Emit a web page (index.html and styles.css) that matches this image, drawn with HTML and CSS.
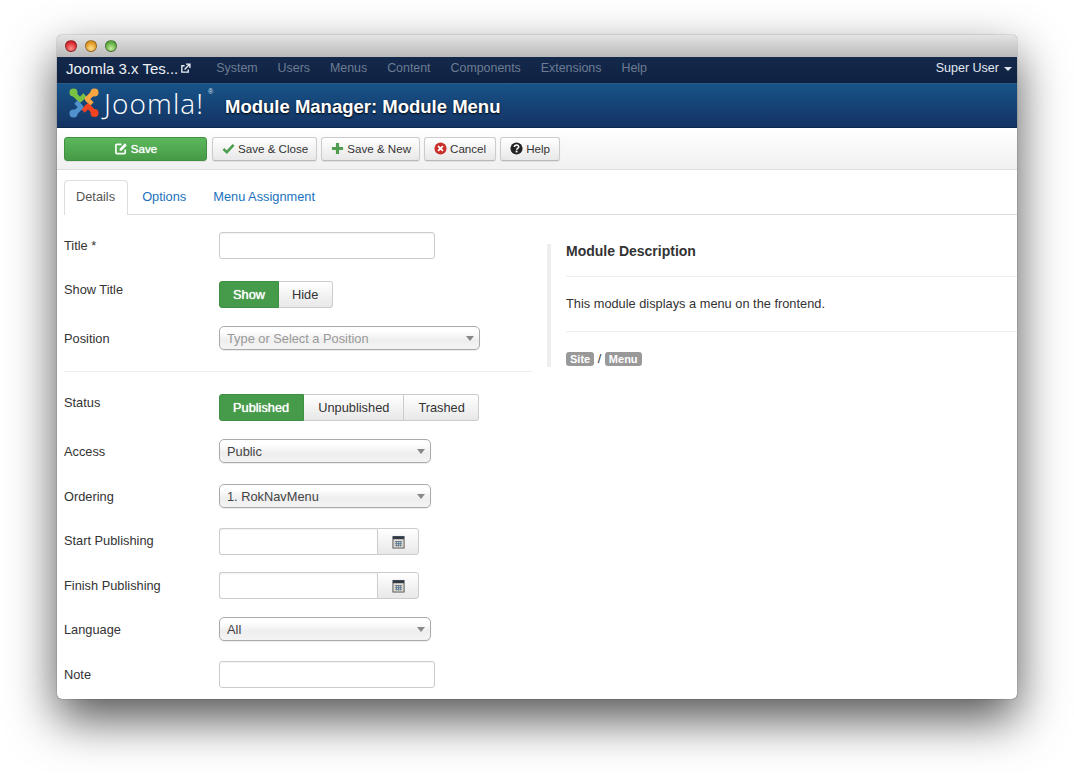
FILE: index.html
```html
<!DOCTYPE html>
<html lang="en">
<head>
    <meta charset="UTF-8">
    <meta name="viewport" content="width=device-width, initial-scale=1.0">
    <title>Module Manager: Module Menu</title>
    <link rel="stylesheet" href="styles.css">
</head>
<body>

<div class="window">
    <!-- Mac title bar -->
    <div class="titlebar">
        <span class="light light-red"></span>
        <span class="light light-yellow"></span>
        <span class="light light-green"></span>
    </div>

    <!-- Top navigation -->
    <div class="navbar">
        <a class="brand">Joomla 3.x Tes...
            <svg class="brand-icon" viewBox="0 0 12 12" width="11" height="11"><path d="M9 7v3H2V3h3" fill="none" stroke="#e8edf3" stroke-width="1.5"/><path d="M5 7l5-5M6.5 1.2h4.3v4.3" fill="none" stroke="#e8edf3" stroke-width="1.5"/></svg>
        </a>
        <ul class="nav-menu">
            <li>System</li>
            <li>Users</li>
            <li>Menus</li>
            <li>Content</li>
            <li>Components</li>
            <li>Extensions</li>
            <li>Help</li>
        </ul>
        <div class="nav-user">Super User <span class="nav-caret"></span></div>
    </div>

    <!-- Logo and page title -->
    <div class="header">
        <div class="logo">
            <svg viewBox="0 0 30 30" width="30" height="30" fill="none" stroke-width="4.6" stroke-linejoin="round">
                <path d="M4 5L11 12L16 7" stroke="#7ac143"/><circle cx="4.5" cy="4.5" r="4" fill="#7ac143"/>
                <path d="M25 4L18 11L23 16" stroke="#f9a541"/><circle cx="25.5" cy="4.5" r="4" fill="#f9a541"/>
                <path d="M26 25L19 18L14 23" stroke="#f44321"/><circle cx="25.5" cy="25" r="4" fill="#f44321"/>
                <path d="M5 26L12 19L7 14" stroke="#5091cd"/><circle cx="4.5" cy="25.5" r="4" fill="#5091cd"/>
            </svg>
            <span class="logo-text">Joomla!</span><span class="logo-reg">®</span>
        </div>
        <h1>Module Manager: Module Menu</h1>
    </div>

    <!-- Toolbar -->
    <div class="toolbar">
        <button class="btn btn-save">
            <svg viewBox="0 0 14 14" width="13" height="13"><path d="M11 8v3.5a1 1 0 0 1-1 1H2a1 1 0 0 1-1-1v-8a1 1 0 0 1 1-1h5" fill="none" stroke="#fff" stroke-width="1.8"/><path d="M5 7.2L10.6 1.4l2.2 2.2L7 9.3H5z" fill="#fff"/></svg>
            Save
        </button>
        <button class="btn">
            <svg viewBox="0 0 14 14" width="13" height="13"><path d="M1.5 7.5L5.2 11L12.5 3" fill="none" stroke="#4f9e4f" stroke-width="2.8"/></svg>
            Save &amp; Close
        </button>
        <button class="btn">
            <svg viewBox="0 0 14 14" width="13" height="13"><path d="M7 1v12M1 7h12" fill="none" stroke="#4f9e4f" stroke-width="3.4"/></svg>
            Save &amp; New
        </button>
        <button class="btn btn-wide">
            <svg viewBox="0 0 14 14" width="13" height="13"><circle cx="7" cy="7" r="6.5" fill="#c9302c"/><path d="M4.4 4.4l5.2 5.2M9.6 4.4l-5.2 5.2" stroke="#fff" stroke-width="2"/></svg>
            Cancel
        </button>
        <button class="btn btn-wide">
            <svg viewBox="0 0 14 14" width="13" height="13"><circle cx="7" cy="7" r="6.5" fill="#222"/><path d="M4.8 5.4c0-2.8 4.6-2.8 4.6-.1 0 1.6-2.3 1.5-2.3 3" fill="none" stroke="#fff" stroke-width="1.7"/><rect x="6.1" y="9.3" width="2" height="1.9" fill="#fff"/></svg>
            Help
        </button>
    </div>

    <!-- Tabs -->
    <ul class="tabs">
        <li class="tab tab-active">Details</li>
        <li class="tab">Options</li>
        <li class="tab">Menu Assignment</li>
    </ul>

    <div class="content">
        <!-- Form column -->
        <form class="form">
            <div class="row row-title">
                <label>Title *</label>
                <input class="field" type="text">
            </div>
            <div class="row row-toggle">
                <label>Show Title</label>
                <div class="btn-group btn-group-small">
                    <span class="opt opt-on">Show</span>
                    <span class="opt">Hide</span>
                </div>
            </div>
            <div class="row row-select">
                <label>Position</label>
                <div class="select select-position"><span class="placeholder">Type or Select a Position</span><i class="caret"></i></div>
            </div>
            <hr class="divider">
            <div class="row row-toggle">
                <label>Status</label>
                <div class="btn-group">
                    <span class="opt opt-on">Published</span>
                    <span class="opt">Unpublished</span>
                    <span class="opt">Trashed</span>
                </div>
            </div>
            <div class="row row-select">
                <label>Access</label>
                <div class="select"><span>Public</span><i class="caret"></i></div>
            </div>
            <div class="row row-select row-tight">
                <label>Ordering</label>
                <div class="select"><span>1. RokNavMenu</span><i class="caret"></i></div>
            </div>
            <div class="row row-date row-tight">
                <label>Start Publishing</label>
                <div class="date-group">
                    <input class="field field-date" type="text">
                    <span class="date-btn">
                        <svg viewBox="0 0 14 14" width="13" height="14"><rect x="1" y="1" width="12" height="12.5" fill="#e9dfd0" stroke="#4a5058"/><rect x="1" y="1" width="12" height="3" fill="#2f3a46"/><path d="M3 6.5h8M3 8.5h8M3 10.5h8M5 6v6M7 6v6M9 6v6" stroke="#5f7d9b" stroke-width="1"/></svg>
                    </span>
                </div>
            </div>
            <div class="row row-date">
                <label>Finish Publishing</label>
                <div class="date-group">
                    <input class="field field-date" type="text">
                    <span class="date-btn">
                        <svg viewBox="0 0 14 14" width="13" height="14"><rect x="1" y="1" width="12" height="12.5" fill="#e9dfd0" stroke="#4a5058"/><rect x="1" y="1" width="12" height="3" fill="#2f3a46"/><path d="M3 6.5h8M3 8.5h8M3 10.5h8M5 6v6M7 6v6M9 6v6" stroke="#5f7d9b" stroke-width="1"/></svg>
                    </span>
                </div>
            </div>
            <div class="row row-select row-tight">
                <label>Language</label>
                <div class="select"><span>All</span><i class="caret"></i></div>
            </div>
            <div class="row">
                <label>Note</label>
                <input class="field" type="text">
            </div>
        </form>

        <!-- Description column -->
        <div class="info">
            <h3>Module Description</h3>
            <hr>
            <p>This module displays a menu on the frontend.</p>
            <hr>
            <div class="crumbs"><span class="tag">Site</span> / <span class="tag">Menu</span></div>
        </div>
    </div>
</div>

</body>
</html>
```

FILE: styles.css
```css
html, body {
    margin: 0;
    height: 100%;
    overflow: hidden;
    background: #fff;
}

body {
    font-family: "Liberation Sans", Arial, sans-serif;
    font-size: 12.8px;
    color: #333;
}

/* Window frame */
.window {
    width: 960px;
    height: 664px;
    margin: 35px 0 0 57px;
    border-radius: 5px;
    overflow: hidden;
    background: #fff;
    box-shadow: 0 20px 48px rgba(0, 0, 0, 0.68), 0 0 1px rgba(0, 0, 0, 0.9);
}

.titlebar {
    height: 22px;
    display: flex;
    align-items: center;
    gap: 8px;
    padding-left: 8px;
    background: linear-gradient(#e4e4e4, #b9b9b9);
}

.light {
    width: 12px;
    height: 12px;
    border-radius: 50%;
    border: 1px solid rgba(0, 0, 0, 0.35);
    box-sizing: border-box;
}
.light-red { background: radial-gradient(circle at 50% 75%, #ff8f8a, #d5232a 70%); }
.light-yellow { background: radial-gradient(circle at 50% 75%, #ffe08a, #dd9420 70%); }
.light-green { background: radial-gradient(circle at 50% 75%, #c4ec9a, #5aa83e 70%); }

/* Top navigation */
.navbar {
    height: 26px;
    display: flex;
    align-items: center;
    background: linear-gradient(#13294c, #0f2141);
    padding: 0 5px 4px 9px;
    box-sizing: border-box;
}

.brand {
    color: #eef1f5;
    font-size: 15px;
    display: flex;
    align-items: center;
    gap: 2px;
    white-space: nowrap;
}

.nav-menu {
    display: flex;
    list-style: none;
    margin: 0 0 0 25px;
    padding: 0;
    gap: 20px;
    color: #6d7c92;
    font-size: 12.4px;
    flex: 1;
}

.nav-user {
    color: #e3e8ee;
    font-size: 12.5px;
    display: flex;
    align-items: center;
    gap: 5px;
}

.nav-caret {
    width: 0;
    height: 0;
    border: 4px solid transparent;
    border-top-color: #dfe5ec;
    border-bottom: 0;
    margin-top: 2px;
}

/* Logo bar */
.header {
    height: 45px;
    display: flex;
    align-items: center;
    background: linear-gradient(#175388, #143363);
    border-top: 1px solid #2b5a86;
    border-bottom: 1px solid #10294f;
    box-sizing: border-box;
    padding-left: 12px;
}

.logo {
    display: flex;
    align-items: center;
    width: 156px;
    gap: 4px;
    margin-top: -5px;
}

.logo-text {
    color: #fff;
    font-family: "Open Sans", Lato, sans-serif;
    font-weight: 300;
    font-size: 28px;
    letter-spacing: 1.1px;
    line-height: 30px;
    margin-left: 1px;
}

.logo-reg {
    color: #dfe7ef;
    font-size: 7px;
    align-self: flex-start;
}

h1 {
    margin: 2px 0 0;
    color: #fff;
    font-size: 18.5px;
    font-weight: bold;
    text-shadow: 0 1px 2px #000;
}

/* Toolbar */
.toolbar {
    height: 42px;
    display: flex;
    align-items: center;
    gap: 4px;
    padding-left: 7px;
    box-sizing: border-box;
    background: linear-gradient(#fff, #f0f0f0);
    border-bottom: 1px solid #ddd;
}

.btn {
    height: 24px;
    display: flex;
    align-items: center;
    gap: 3px;
    padding: 0 8px 0 9px;
    font-family: inherit;
    font-size: 11.6px;
    color: #333;
    background: linear-gradient(#fff, #e8e8e8);
    border: 1px solid #ccc;
    border-bottom-color: #b8b8b8;
    border-radius: 3px;
    box-shadow: 0 1px 1px rgba(0, 0, 0, 0.08);
}

.btn-wide { padding: 0 9px; }

.btn-save {
    width: 143px;
    justify-content: center;
    margin-right: 1px;
    color: #fff;
    background: linear-gradient(#5cb85c, #469b46);
    border-color: #409040;
    text-shadow: 0 0 1px #fff;
}

/* Tabs */
.tabs {
    display: flex;
    gap: 2px;
    list-style: none;
    margin: 10px 0 0 7px;
    padding: 0;
    border-bottom: 1px solid #ddd;
    height: 34px;
}

.tab {
    padding: 0 12px 0 11px;
    height: 34px;
    line-height: 32px;
    color: #1a72bd;
    border: 1px solid transparent;
    border-bottom: 0;
    box-sizing: border-box;
}

.tab-active {
    color: #555;
    background: #fff;
    border-color: #ddd;
    border-radius: 4px 4px 0 0;
    height: 35px;
}

/* Form and description columns */
.content {
    display: flex;
    padding-left: 7px;
}

.form {
    width: 468px;
    padding-top: 17px;
    flex: none;
}

.row {
    display: flex;
    align-items: flex-start;
    margin-bottom: 18px;
}

.row label {
    width: 155px;
    flex: none;
    line-height: 16px;
    padding-top: 6px;
}

.row-title { margin-bottom: 22px; }
.row-toggle label { padding-top: 1px; }
.row-select { margin-bottom: 21px; }
.row-select label { padding-top: 5px; }
.row-date { margin-bottom: 18px; }
.row-date label { padding-top: 5px; }
.row-date:not(.row-tight) label { padding-top: 6px; }
.row-date.row-tight { margin-bottom: 17px; }
.row-select.row-tight { margin-bottom: 20px; }

.divider {
    border: 0;
    border-top: 1px solid #eee;
    margin: 0 0 22px;
}

.field {
    width: 216px;
    height: 27px;
    box-sizing: border-box;
    border: 1px solid #ccc;
    border-radius: 3px;
    background: #fff;
    margin: 0;
    padding: 0 6px;
    box-shadow: inset 0 1px 1px rgba(0, 0, 0, 0.05);
}

.btn-group {
    display: flex;
    height: 27px;
}

.opt {
    padding: 0 14px;
    line-height: 25px;
    border: 1px solid #ccc;
    border-left: 0;
    background: linear-gradient(#fff, #e8e8e8);
}
.opt:first-child {
    padding-left: 13px;
    border-left: 1px solid #ccc;
    border-radius: 3px 0 0 3px;
}
.opt:last-child {
    padding-right: 13px;
    border-radius: 0 3px 3px 0;
}
.btn-group-small .opt { padding: 0 13px; }
.btn-group-small .opt:last-child { padding-right: 14px; }

.opt-on {
    color: #fff;
    background: #469b4a;
    border-color: #3f8f42 !important;
    text-shadow: 0 0 1px #fff;
}

.select {
    width: 212px;
    height: 24px;
    box-sizing: border-box;
    display: flex;
    align-items: center;
    justify-content: space-between;
    padding: 0 5px 0 7px;
    border: 1px solid #aaa;
    border-radius: 5px;
    background: linear-gradient(#fff 20%, #eee 60%, #f4f4f4);
    box-shadow: 0 1px 1px rgba(0, 0, 0, 0.08);
    color: #444;
}

.select-position { width: 261px; }
.placeholder { color: #999; }

.caret {
    width: 0;
    height: 0;
    border: 4px solid transparent;
    border-top: 5px solid #888;
    border-bottom: 0;
}

.date-group { display: flex; }

.field-date {
    width: 158px;
    border-right: 0;
    border-radius: 3px 0 0 3px;
}

.date-btn {
    width: 42px;
    height: 27px;
    box-sizing: border-box;
    display: flex;
    align-items: center;
    justify-content: center;
    border: 1px solid #ccc;
    border-radius: 0 3px 3px 0;
    background: linear-gradient(#fff, #e8e8e8);
}

.info {
    margin: 29px 0 0 15px;
    padding-left: 15px;
    border-left: 4px solid #eee;
    height: 123px;
    flex: 1;
}

.info h3 {
    margin: -1px 0 0;
    font-size: 14px;
    line-height: 16px;
}

.info hr {
    border: 0;
    border-top: 1px solid #eee;
    margin: 17px 0;
}

.info p {
    margin: 0;
    line-height: 20px;
}

.crumbs {
    line-height: 14px;
    padding-top: 3px;
}

.tag {
    display: inline-block;
    padding: 0 4px;
    font-size: 11px;
    font-weight: bold;
    line-height: 14px;
    color: #fff;
    background: #999;
    border-radius: 3px;
}
```
